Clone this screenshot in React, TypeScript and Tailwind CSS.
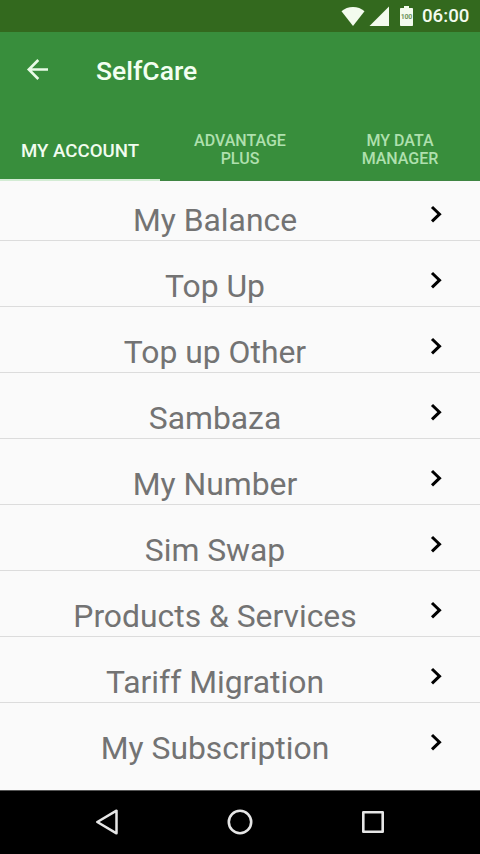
import clsx from "clsx";

const tabs = [
  { lines: ["MY ACCOUNT"], active: true },
  { lines: ["ADVANTAGE", "PLUS"], active: false },
  { lines: ["MY DATA", "MANAGER"], active: false },
];

const items = [
  "My Balance",
  "Top Up",
  "Top up Other",
  "Sambaza",
  "My Number",
  "Sim Swap",
  "Products & Services",
  "Tariff Migration",
  "My Subscription",
];

const StatusBar = () => (
  <div className="flex h-8 items-center bg-[#33691e] pl-[341px] text-[#f3fbee]">
    <svg className="h-5 w-6" viewBox="0 0 24 20" fill="currentColor">
      <path d="M12 20 0.5 5.2C3.6 2.6 7.6 1 12 1s8.4 1.6 11.5 4.2L12 20z" />
    </svg>
    <svg className="ml-1 h-5 w-5" viewBox="0 0 20 20" fill="currentColor">
      <path d="M20 0.5V20H0.5L20 0.5z" />
    </svg>
    {/* battery with the level printed inside */}
    <svg className="mb-px ml-[11px] h-5 w-[13px]" viewBox="0 0 13 20" fill="currentColor">
      <path d="M4 0h5v2h3.2c.5 0 .8.3.8.8v16.4c0 .5-.3.8-.8.8H.8c-.5 0-.8-.3-.8-.8V2.800c0-.5.3-.8.8-.8H4V0z" />
      <text
        x="6.500"
        y="12.500"
        textAnchor="middle"
        textLength="11.500"
        lengthAdjust="spacing"
        className="fill-[#6f9560] text-[7px] font-bold"
      >
        100
      </text>
    </svg>
    <span className="ml-[9px] text-[18.67px] font-medium leading-8">06:00</span>
  </div>
);

const Header = () => (
  <header className="bg-[#388e3c]">
    <div className="flex h-[88px] items-start pl-[26px] pt-[23px]">
      <svg
        className="mt-[3px] h-[23px] w-[23px] text-[#e8fbe6]"
        viewBox="0 0 23 23"
        fill="none"
        stroke="currentColor"
        strokeWidth="2.6"
      >
        <path d="M22 11.500H3M12.300 2 2.800 11.500l9.500 9.500" />
      </svg>
      <h1 className="ml-[47px] text-[26.5px] font-medium leading-8 text-[#f3fff1]">SelfCare</h1>
    </div>
    <nav className="grid h-[61px] grid-cols-3">
      {tabs.map((tab) => (
        <div
          key={tab.lines[0]}
          className={clsx(
            "flex flex-col items-center justify-center text-center font-medium",
            tab.active
              ? "border-b-2 border-[#d3ecd4] pt-0.5 text-[18.67px] leading-[22px] text-[#f1fcef]"
              : "border-b border-[#3f8542] pb-px text-[16px] leading-[18px] text-[#afe0ae]"
          )}
        >
          {tab.lines.map((line) => (
            <span key={line}>{line}</span>
          ))}
        </div>
      ))}
    </nav>
  </header>
);

const MenuRow = ({ title }: { title: string }) => (
  <li className="flex h-[66px] shrink-0 items-end border-b border-[#dcdcdc] last:border-transparent">
    <span className="w-[430px] pb-px text-center text-[31.85px] leading-[38px] text-[#737373]">{title}</span>
    <svg
      className="mb-[17px] h-[18px] w-3"
      viewBox="0 0 12 18"
      fill="none"
      stroke="#000"
      strokeWidth="3"
    >
      <path d="M2 2 9.500 9.200 2 16.400" />
    </svg>
  </li>
);

const NavBar = () => (
  <div className="flex h-16 items-center justify-between border-t border-[#555] bg-black px-[95px] pb-0.5 text-[#e6e6e6]">
    <svg className="h-[26px] w-6" viewBox="0 0 24 26" fill="none" stroke="currentColor" strokeWidth="2.5" strokeLinejoin="round">
      <path d="M21.500 1.700v22.600L2.300 13l19.200-11.300z" />
    </svg>
    <svg className="h-[26px] w-[26px]" viewBox="0 0 26 26" fill="none" stroke="currentColor" strokeWidth="2.6">
      <circle cx="13" cy="13" r="11.200" />
    </svg>
    <svg className="h-6 w-6" viewBox="0 0 24 24" fill="none" stroke="currentColor" strokeWidth="2.6" strokeLinejoin="round">
      <rect x="2.300" y="2.300" width="19.400" height="19.400" />
    </svg>
  </div>
);

export default function App() {
  return (
    <div className="flex h-[854px] w-[480px] flex-col overflow-hidden bg-[#fafafa] font-['Roboto',sans-serif]">
      <StatusBar />
      <Header />
      {/* list sits slightly scrolled under the tabs */}
      <main className="flex-1 overflow-hidden">
        <ul className="-mt-1.5 flex flex-col">
          {items.map((item) => (
            <MenuRow key={item} title={item} />
          ))}
        </ul>
      </main>
      <NavBar />
    </div>
  );
}
